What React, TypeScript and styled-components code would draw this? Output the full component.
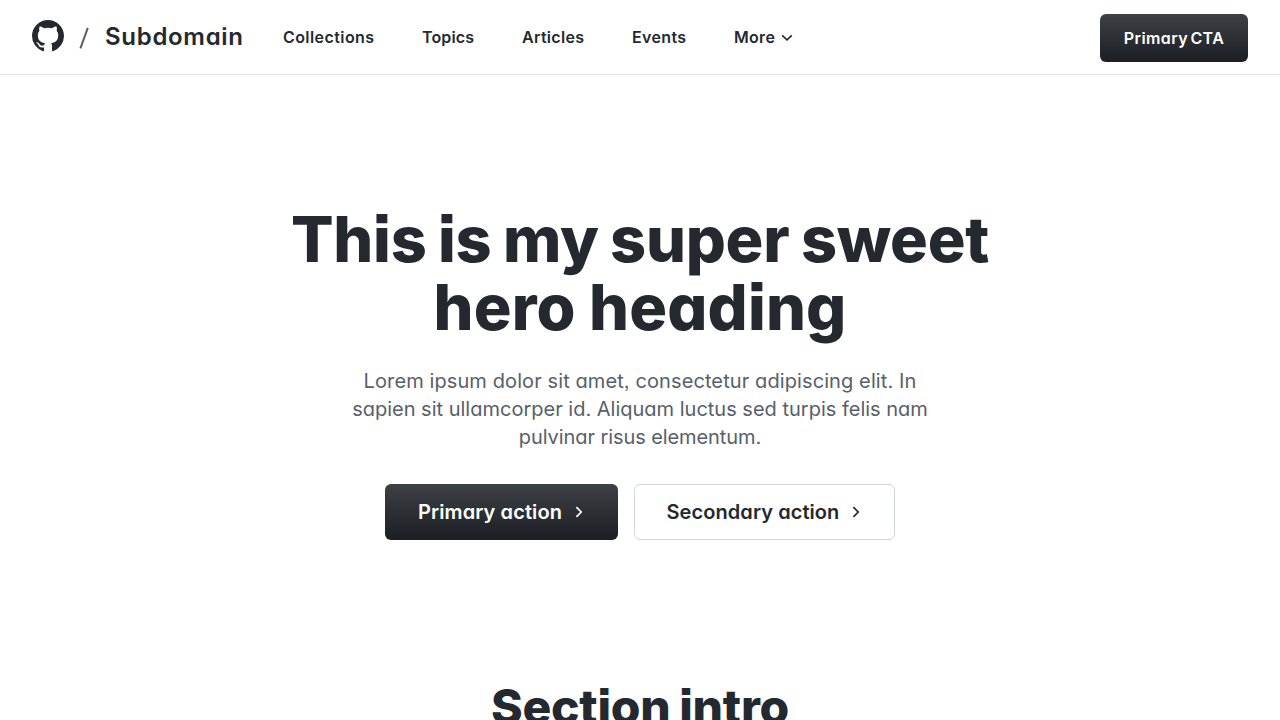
import React from "react";
import styled, { createGlobalStyle } from "styled-components";

const Global = createGlobalStyle`
  * { box-sizing: border-box; }
  body {
    margin: 0;
    height: 720px;
    overflow: hidden;
    background: #ffffff;
    color: #24292f;
    font-family: Inter, "Liberation Sans", sans-serif;
    font-feature-settings: "cv11" 1, "ss07" 1;
    font-size: 16px;
  }
`;

const Header = styled.header`
  display: flex;
  align-items: center;
  height: 75px;
  padding: 0 32px;
  border-bottom: 1px solid #e1e3e5;
`;

const Brand = styled.a`
  display: flex;
  align-items: center;
  width: 251px;
  height: 74px;
  color: #24292f;
  text-decoration: none;
`;

const Mark = styled.svg`
  display: block;
  flex: none;
  margin-bottom: 2px;
`;

const Slash = styled.svg`
  display: block;
  flex: none;
  margin: 2px 16px 0 15px;
`;

const Tracked = styled.span<{ $tracking?: number; $words?: number }>`
  letter-spacing: ${(p) => p.$tracking ?? 0}px;
  word-spacing: ${(p) => p.$words ?? 0}px;
  white-space: nowrap;
`;

const Subdomain = styled(Tracked)`
  font-size: 24px;
  font-weight: 600;
  line-height: 32px;
`;

const Nav = styled.nav`
  display: flex;
  flex: 1;
`;

const NavLink = styled.a<{ $width: number }>`
  display: flex;
  align-items: center;
  gap: 6px;
  width: ${(p) => p.$width}px;
  margin-right: 48px;
  color: #24292f;
  font-weight: 600;
  line-height: 24px;
  text-decoration: none;
`;

const Button = styled.a<{ $primary?: boolean; $large?: boolean; $width: number }>`
  display: flex;
  align-items: center;
  justify-content: center;
  gap: ${(p) => (p.$large ? 13 : 0)}px;
  width: ${(p) => p.$width}px;
  height: ${(p) => (p.$large ? 56 : 48)}px;
  padding-right: ${(p) => (p.$large ? 2 : 0)}px;
  border-radius: 6px;
  border: ${(p) => (p.$primary ? "none" : "1px solid #d0d7de")};
  background: ${(p) => (p.$primary ? "linear-gradient(180deg, #3d4146 0%, #1b1f24 100%)" : "#ffffff")};
  color: ${(p) => (p.$primary ? "#ffffff" : "#24292f")};
  font-size: ${(p) => (p.$large ? 20 : 16)}px;
  font-weight: 600;
  text-decoration: none;
`;

const HeaderAction = styled.div`
  padding-top: 2px;
`;

const Hero = styled.section`
  display: flex;
  flex-direction: column;
  align-items: center;
  padding-top: 130px;
  text-align: center;
`;

const Title = styled.h1`
  margin: 0 0 26px;
  font-size: 63px;
  font-weight: 800;
  line-height: 68px;
`;

const Lead = styled.p`
  margin: 0;
  color: #57606a;
  font-size: 20px;
  line-height: 28px;
`;

const Line = styled(Tracked)`
  display: block;
`;

const Actions = styled.div`
  display: flex;
  gap: 16px;
  margin-top: 33px;
`;

const SectionTitle = styled.h2`
  margin: 141px 0 0;
  font-size: 48px;
  font-weight: 800;
  line-height: 52px;
  text-align: center;
`;

const ChevronDown = () => (
  <svg width="12" height="8" viewBox="0 0 12 8" fill="none" stroke="currentColor" strokeWidth="1.6">
    <path d="M1.2 2.3 6 6.9 10.8 2.3" />
  </svg>
);

const ChevronRight = () => (
  <svg width="8" height="12" viewBox="0 0 8 12" fill="none" stroke="currentColor" strokeWidth="1.7">
    <path d="M1.4 1.2 6.2 6 1.4 10.8" />
  </svg>
);

const links = [
  { label: "Collections", width: 91, tracking: 0.42 },
  { label: "Topics", width: 52, tracking: 0.15 },
  { label: "Articles", width: 62, tracking: 0.3 },
  { label: "Events", width: 54, tracking: 0.35 },
];

export default function App() {
  return (
    <>
      <Global />
      <Header>
        <Brand href="#">
          <Mark width="32" height="32" viewBox="0 0 16 16" fill="currentColor">
            <path d="M8 0c4.42 0 8 3.58 8 8a8.013 8.013 0 0 1-5.45 7.59c-.4.08-.55-.17-.55-.38 0-.27.01-1.13.01-2.2 0-.75-.25-1.23-.54-1.48 1.78-.2 3.65-.88 3.65-3.95 0-.88-.31-1.59-.82-2.15.08-.2.36-1.02-.08-2.12 0 0-.67-.22-2.2.82-.64-.18-1.32-.27-2-.27-.68 0-1.36.09-2 .27-1.53-1.03-2.2-.82-2.2-.82-.44 1.1-.16 1.92-.08 2.12-.51.56-.82 1.28-.82 2.15 0 3.06 1.86 3.75 3.64 3.95-.23.2-.44.55-.51 1.07-.46.21-1.61.55-2.33-.66-.15-.24-.6-.83-1.23-.82-.67.01-.27.38.01.53.34.19.73.9.82 1.13.16.45.68 1.31 2.69.94 0 .67.01 1.3.01 1.49 0 .21-.15.45-.55.38A7.995 7.995 0 0 1 0 8c0-4.42 3.58-8 8-8Z" />
          </Mark>
          <Slash width="10" height="22" viewBox="0 0 10 22" fill="none" stroke="#57606a" strokeWidth="2">
            <path d="M1.4 21.4 8.8 .8" />
          </Slash>
          <Subdomain $tracking={0.7}>Subdomain</Subdomain>
        </Brand>
        <Nav>
          {links.map((l) => (
            <NavLink key={l.label} href="#" $width={l.width}>
              <Tracked $tracking={l.tracking}>{l.label}</Tracked>
            </NavLink>
          ))}
          <NavLink href="#" $width={60}>
            <Tracked $tracking={0.3}>More</Tracked>
            <ChevronDown />
          </NavLink>
        </Nav>
        <HeaderAction>
          <Button href="#" $primary $width={148}>
            <Tracked $tracking={0.4} $words={-2}>Primary CTA</Tracked>
          </Button>
        </HeaderAction>
      </Header>
      <main>
        <Hero>
          <Title>
            <Line $tracking={-0.27} $words={-2}>This is my super sweet</Line>
            <Line $tracking={0.15} $words={-0.5}>hero heading</Line>
          </Title>
          <Lead>
            <Line $tracking={0.1}>Lorem ipsum dolor sit amet, consectetur adipiscing elit. In</Line>
            <Line>sapien sit ullamcorper id. Aliquam luctus sed turpis felis nam</Line>
            <Line $tracking={-0.08}>pulvinar risus elementum.</Line>
          </Lead>
          <Actions>
            <Button href="#" $primary $large $width={233}>
              <Tracked $tracking={0.1}>Primary action</Tracked>
              <ChevronRight />
            </Button>
            <Button href="#" $large $width={261}>
              <Tracked $tracking={0.07}>Secondary action</Tracked>
              <ChevronRight />
            </Button>
          </Actions>
        </Hero>
        <SectionTitle>
          <Line $tracking={-0.25} $words={-1.5}>Section intro</Line>
        </SectionTitle>
      </main>
    </>
  );
}
